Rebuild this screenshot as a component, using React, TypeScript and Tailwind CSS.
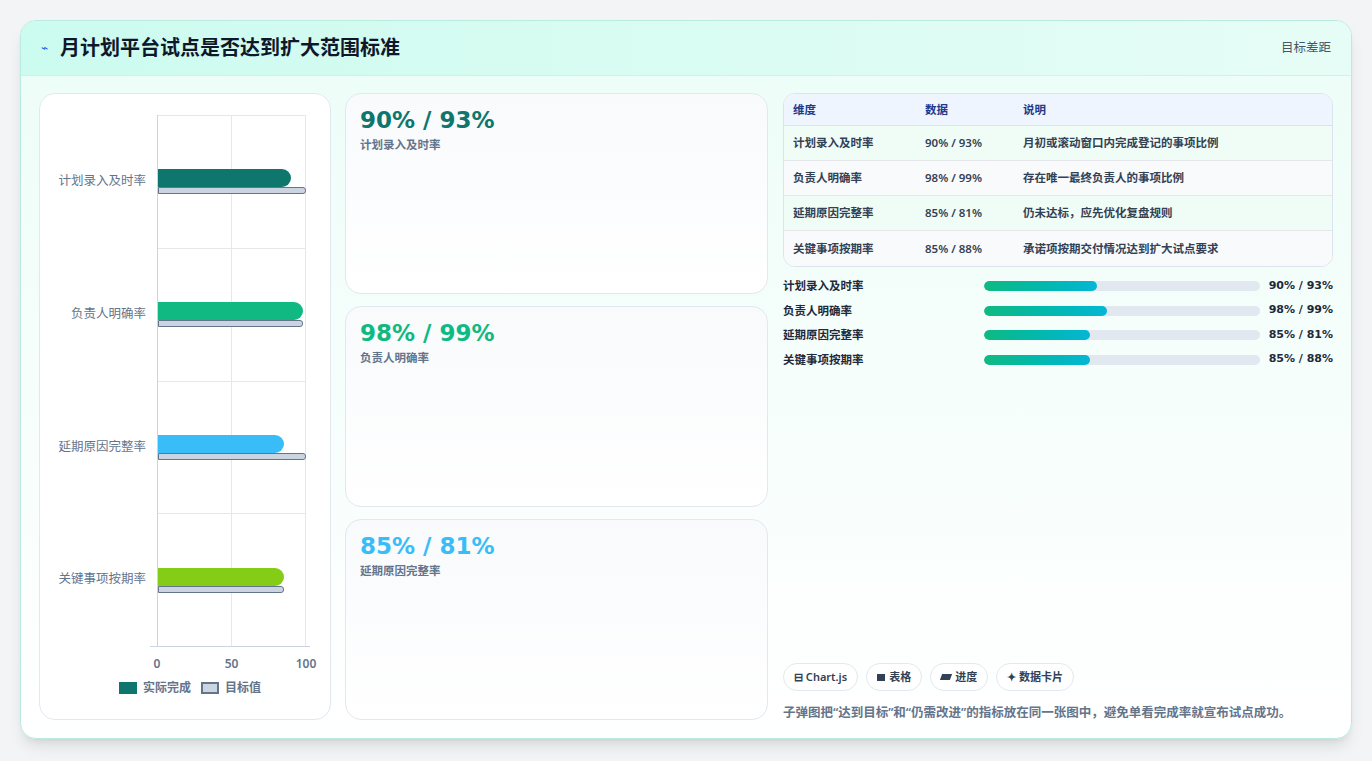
import React from "react";

const font = { fontFamily: '"Noto Sans", "Noto Sans CJK SC", sans-serif' };
const num = { fontFamily: '"DejaVu Sans", "Noto Sans CJK SC", sans-serif' };

const bars = [
  { label: "计划录入及时率", actual: 90, target: 100, color: "bg-[#0f766e]" },
  { label: "负责人明确率", actual: 98, target: 98, color: "bg-[#10b981]" },
  { label: "延期原因完整率", actual: 85, target: 100, color: "bg-[#38bdf8]" },
  { label: "关键事项按期率", actual: 85, target: 85, color: "bg-[#84cc16]" },
];

const cards = [
  { v: "90% / 93%", l: "计划录入及时率", c: "text-[#0f766e]" },
  { v: "98% / 99%", l: "负责人明确率", c: "text-[#10b981]" },
  { v: "85% / 81%", l: "延期原因完整率", c: "text-[#38bdf8]" },
];

const rows = [
  ["计划录入及时率", "90% / 93%", "月初或滚动窗口内完成登记的事项比例"],
  ["负责人明确率", "98% / 99%", "存在唯一最终负责人的事项比例"],
  ["延期原因完整率", "85% / 81%", "仍未达标，应先优化复盘规则"],
  ["关键事项按期率", "85% / 88%", "承诺项按期交付情况达到扩大试点要求"],
];

const progress = [
  ["计划录入及时率", 41, "90% / 93%"],
  ["负责人明确率", 44.5, "98% / 99%"],
  ["延期原因完整率", 38.5, "85% / 81%"],
  ["关键事项按期率", 38.5, "85% / 88%"],
] as const;

function Chart() {
  return (
    <div className="w-[292px] rounded-2xl border border-[#e2e8f0] bg-white flex flex-col pt-[21px] pb-[22px]">
      <div className="flex flex-1">
        <div className="w-[117px] flex flex-col">
          {bars.map((b) => (
            <div key={b.label} className="flex-1 flex items-center justify-end pr-[11px] text-[12.5px] text-[#64748b]">
              {b.label}
            </div>
          ))}
        </div>
        <div className="relative w-[149px] border-l border-[#cbd5e1]">
          <div className="absolute inset-0 grid grid-cols-2">
            <div className="border-r border-[#e5e7eb]" />
            <div className="border-r border-[#e5e7eb]" />
          </div>
          <div className="relative h-full flex flex-col">
            {bars.map((b) => (
              <div key={b.label} className="flex-1 flex flex-col justify-center border-t border-[#e5e7eb]">
                <div className={"h-[18px] rounded-r-[9px] " + b.color} style={{ width: `${b.actual}%` }} />
                <div className="h-[7px] rounded-r-[3px] bg-[#cbd5e1] border border-[#64748b]" style={{ width: `${b.target}%` }} />
              </div>
            ))}
          </div>
        </div>
      </div>
      <div className="ml-[110px] w-[160px] border-t border-[#cbd5e1]" />
      <div className="relative h-[22px] ml-[117px] w-[149px] text-[12px] font-semibold text-[#64748b] mt-[8px]">
        <span className="absolute left-0 -translate-x-1/2">0</span>
        <span className="absolute left-1/2 -translate-x-1/2">50</span>
        <span className="absolute left-full -translate-x-1/2">100</span>
      </div>
      <div className="flex justify-center items-center gap-[6px] text-[12px] font-semibold text-[#64748b] mt-[2px] pl-[10px]">
        <span className="w-[18px] h-[12px] bg-[#0f766e]" />
        <span>实际完成</span>
        <span className="w-[18px] h-[12px] bg-[#cbd5e1] border-2 border-[#64748b] ml-1" />
        <span>目标值</span>
      </div>
    </div>
  );
}

export default function App() {
  return (
    <div className="min-h-[761px] bg-[#f3f4f6] p-[20px]" style={font}>
      <div className="h-[719px] rounded-2xl border border-[#b9ebe1] bg-gradient-to-b from-[#ecfdf7] to-white shadow-lg flex flex-col overflow-hidden">
        <div className="h-[55px] flex items-center justify-between px-[20px] bg-gradient-to-r from-[#ccfbef] to-[#e6fdf6] border-b border-[#d1f0e8]">
          <div className="flex items-center gap-[12px]">
            <span className="text-[#2563eb] text-[12px]">⌁</span>
            <span className="text-[20px] font-bold text-[#0f172a]">月计划平台试点是否达到扩大范围标准</span>
          </div>
          <span className="text-[12.5px] text-[#475569]">目标差距</span>
        </div>
        <div className="flex-1 flex gap-[14px] px-[18px] pt-[17px] pb-[18px]">
          <Chart />
          <div className="w-[423px] flex flex-col gap-[12px]">
            {cards.map((c) => (
              <div key={c.l} className="flex-1 rounded-2xl border border-[#e2e8f0] bg-gradient-to-b from-[#f8fafc] to-white px-[14px] pt-[10px]">
                <div className={"text-[23px] font-bold leading-[32px] " + c.c} style={num}>{c.v}</div>
                <div className="text-[11.5px] font-semibold text-[#64748b]">{c.l}</div>
              </div>
            ))}
          </div>
          <div className="flex-1 flex flex-col pl-[1px]">
            <div className="rounded-xl border border-[#dbe3ee] overflow-hidden bg-white">
              <div className="flex h-[32px] items-center bg-[#eef5ff] border-b border-[#dbe3ee] text-[11.5px] font-bold text-[#1e3a8a] px-[9px]">
                <span className="w-[132px]">维度</span>
                <span className="w-[98px]">数据</span>
                <span>说明</span>
              </div>
              {rows.map((r, i) => (
                <div key={r[0]} className={"flex h-[35px] items-center px-[9px] text-[11.5px] font-semibold text-[#334155] " + (i < 3 ? "border-b border-[#e5e7eb] " : "") + (i % 2 === 0 ? "bg-[#f0fdf7]" : "bg-[#f8fafc]")}>
                  <span className="w-[132px]">{r[0]}</span>
                  <span className="w-[98px]">{r[1]}</span>
                  <span>{r[2]}</span>
                </div>
              ))}
            </div>
            <div className="mt-[9px] flex flex-col gap-[4.5px]">
              {progress.map((p) => (
                <div key={p[0]} className="flex items-center h-[20px] text-[11.5px] font-semibold text-[#1e293b]">
                  <span className="w-[201px]">{p[0]}</span>
                  <div className="w-[276px] h-[10px] rounded-full bg-[#e2e8f0] overflow-hidden">
                    <div className="h-full rounded-full bg-gradient-to-r from-[#10b981] to-[#06b6d4]" style={{ width: `${p[1]}%` }} />
                  </div>
                  <span className="flex-1 text-right font-bold text-[11px]" style={num}>{p[2]}</span>
                </div>
              ))}
            </div>
            <div className="flex-1" />
            <div className="flex gap-[8px] text-[11px] font-semibold text-[#334155]">
              <span className="rounded-full border border-[#e2e8f0] bg-white px-[10px] h-[28px] flex items-center gap-1">⊟ Chart.js</span>
              <span className="rounded-full border border-[#e2e8f0] bg-white px-[10px] h-[28px] flex items-center gap-1"><span className="w-[8px] h-[7px] bg-[#334155]" />表格</span>
              <span className="rounded-full border border-[#e2e8f0] bg-white px-[10px] h-[28px] flex items-center gap-1"><span className="w-[10px] h-[6px] bg-[#334155] skew-x-[-20deg]" />进度</span>
              <span className="rounded-full border border-[#e2e8f0] bg-white px-[10px] h-[28px] flex items-center gap-1">✦ 数据卡片</span>
            </div>
            <div className="mt-[13px] mb-[-3px] text-[12.5px] font-semibold text-[#64748b]">子弹图把“达到目标”和“仍需改进”的指标放在同一张图中，避免单看完成率就宣布试点成功。</div>
          </div>
        </div>
      </div>
    </div>
  );
}
